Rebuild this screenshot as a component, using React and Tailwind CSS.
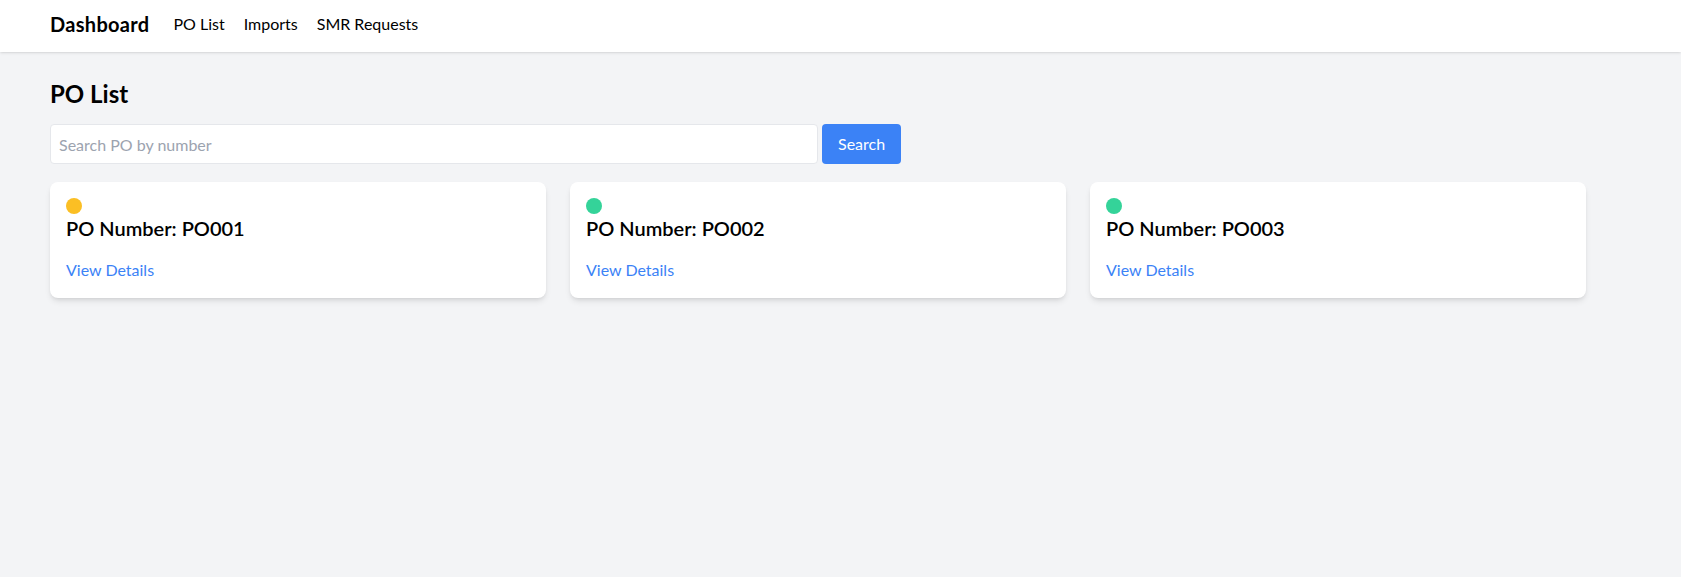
import React, { useState } from 'react';

const orders = [
  { id: 1, number: 'PO001', status: 'pending' },
  { id: 2, number: 'PO002', status: 'approved' },
  { id: 3, number: 'PO003', status: 'approved' },
];

const App = () => {
  const [query, setQuery] = useState('');

  return (
    <div className="min-h-screen bg-[#f3f4f6] text-black font-['Segoe_UI','Lato','Noto_Sans',sans-serif]">
      {/* Navbar */}
      <nav className="bg-white shadow-[0_1px_3px_0_rgba(0,0,0,0.1),0_1px_2px_-1px_rgba(0,0,0,0.1)]">
        <div className="w-[1536px] ml-[50px] pt-[10px] pb-[14px] flex items-center gap-[19px]">
          <span className="text-xl font-bold tracking-[0.3px] mr-[5px]">Dashboard</span>
          <a href="#" className="text-base">PO List</a>
          <a href="#" className="text-base">Imports</a>
          <a href="#" className="text-base">SMR Requests</a>
        </div>
      </nav>

      {/* Main */}
      <main className="w-[1536px] ml-[50px] py-6">
        <h1 className="text-2xl font-bold mt-0.5 mb-3.5">PO List</h1>

        <div className="flex mb-[18px]">
          <input
            type="text"
            value={query}
            onChange={(e) => setQuery(e.target.value)}
            placeholder="Search PO by number"
            className="w-1/2 h-10 px-2 bg-white border border-[#e5e7eb] rounded text-base outline-none placeholder:text-[#9ca3af]"
          />
          <button className="ml-1 h-10 px-4 bg-[#3b82f6] text-white rounded text-base">
            Search
          </button>
        </div>

        <div className="grid grid-cols-3 gap-6">
          {orders.map((po) => (
            <div
              key={po.id}
              className="bg-white rounded-lg p-4 shadow-[0_4px_6px_-1px_rgba(0,0,0,0.1),0_2px_4px_-2px_rgba(0,0,0,0.1)]"
            >
              <div
                className={
                  po.status === 'pending'
                    ? 'w-4 h-4 rounded-full bg-[#fbbf24]'
                    : 'w-4 h-4 rounded-full bg-[#34d399]'
                }
              />
              <h2 className="text-xl font-semibold">PO Number: {po.number}</h2>
              <a href="#" className="inline-block mt-4 text-[#3b82f6]">
                View Details
              </a>
            </div>
          ))}
        </div>
      </main>
    </div>
  );
};

export default App;
